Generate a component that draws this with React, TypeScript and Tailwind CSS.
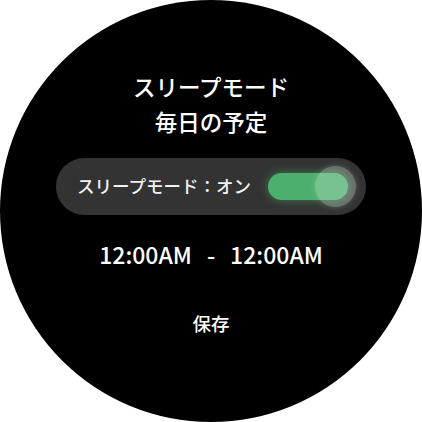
import React from 'react'

export default function App() {
  return (
    <div
      className="w-[422px] h-[422px] bg-white"
      style={{ fontFamily: '"Noto Sans CJK JP", "Noto Sans", sans-serif' }}
    >
      <div className="w-[422px] h-[422px] rounded-full bg-black flex flex-col items-center text-white">
        {/* Title */}
        <div className="mt-[69px] flex flex-col items-center text-[22.5px] leading-[35px] font-medium">
          <p>スリープモード</p>
          <p>毎日の予定</p>
        </div>

        {/* Toggle pill */}
        <div className="mt-[19px] w-[310px] h-[57px] rounded-full bg-[#333333] flex items-center pl-[21px] pr-[18px] justify-between">
          <span className="text-[17.5px] font-medium text-[#f2f2f2]">スリープモード：オン</span>
          <div className="relative w-[80px] h-[27px] rounded-full bg-[#4caf6e] shadow-[0_0_10px_rgba(76,175,110,0.6)]">
            <div className="absolute right-[-8px] top-[-7px] w-[41px] h-[41px] rounded-full bg-[rgba(200,230,210,0.35)] shadow-[0_0_6px_rgba(255,255,255,0.2)]" />
          </div>
        </div>

        {/* Time range */}
        <div className="mt-[22px] flex items-center gap-[15px] text-[23px] font-medium">
          <span>12:00AM</span>
          <span>-</span>
          <span>12:00AM</span>
        </div>

        {/* Save */}
        <button className="mt-[38px] text-[18.5px] font-medium">保存</button>
      </div>
    </div>
  )
}
